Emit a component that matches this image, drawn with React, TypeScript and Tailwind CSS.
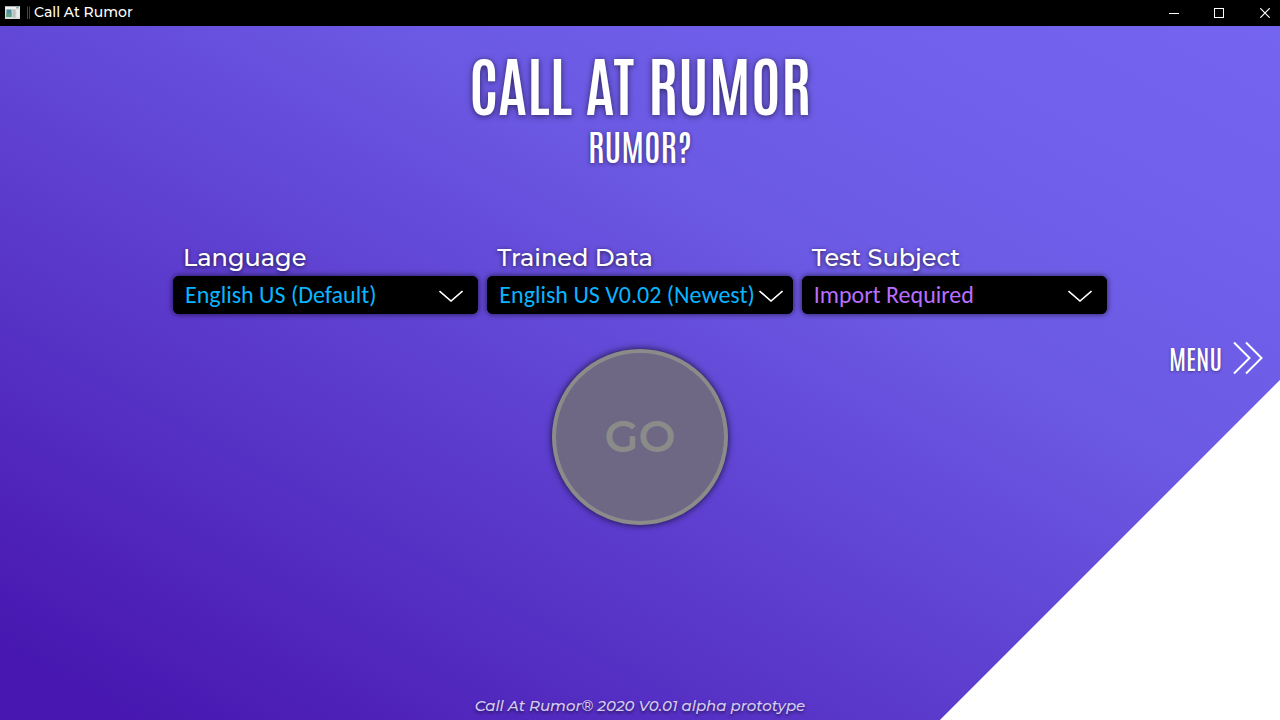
import { useState } from "react";

type FieldProps = {
  id: string;
  label: string;
  options: string[];
  tone: string;
  arrow: string;
};

function SelectField({ id, label, options, tone, arrow }: FieldProps) {
  const [value, setValue] = useState(options[0]);
  return (
    <div className="flex min-w-0 flex-col">
      <label
        htmlFor={id}
        className="pl-[10px] font-['Montserrat','Inter',sans-serif] text-2xl leading-9 font-medium text-white [text-shadow:0_1px_4px_rgba(0,0,0,0.7)]"
      >
        {label}
      </label>
      <div className="grid items-center rounded-md bg-black shadow-[0_0_5px_1px_rgba(0,0,0,0.5)]">
        <select
          id={id}
          value={value}
          onChange={(e) => setValue(e.target.value)}
          className={`col-start-1 row-start-1 h-[38px] w-full cursor-pointer appearance-none rounded-md bg-black pl-3 font-['Carlito','Lato',sans-serif] text-2xl leading-8 ${tone}`}
        >
          {options.map((o) => (
            <option key={o}>{o}</option>
          ))}
        </select>
        <svg
          aria-hidden="true"
          viewBox="0 0 24 14"
          className={`pointer-events-none col-start-1 row-start-1 h-[14px] w-6 justify-self-end ${arrow}`}
          fill="none"
          stroke="#fff"
          strokeWidth="1.6"
        >
          <path d="M0.5 3 12 13 23.5 3" />
        </svg>
      </div>
    </div>
  );
}

export default function App() {
  return (
    <div className="flex min-h-screen flex-col bg-white font-['Montserrat','Inter',sans-serif]">
      <header className="flex h-[26px] items-center bg-black text-white">
        <svg aria-hidden="true" viewBox="0 0 26 14" className="ml-1 h-[14px] w-[26px]">
          <rect x="1" y="0.5" width="15" height="12.5" fill="#d9dcdc" />
          <rect x="1" y="0.5" width="15" height="2.5" fill="#f0f1f1" />
          <rect x="12" y="1" width="3" height="1.5" fill="#8fb4bd" />
          <rect x="2.5" y="3.5" width="5" height="7.5" fill="#4f8fa0" />
          <rect x="2.5" y="7" width="5" height="4" fill="#58a287" />
          <rect x="8.5" y="3.5" width="3" height="8" fill="#bcbfbf" />
          <rect x="12.5" y="3.5" width="3" height="8" fill="#e9ecea" />
          <path d="M23.5 0.5V13M25.5 0.5V13" stroke="#444" strokeWidth="1" />
        </svg>
        <h1 className="ml-1 pb-[2px] text-sm leading-5 font-medium">Call At Rumor</h1>
        <div className="ml-auto flex h-full">
          <button aria-label="Minimize" className="flex w-[45px] items-center justify-center">
            <svg viewBox="0 0 10 10" className="size-[10px]" stroke="#fff"><path d="M0 5.5H10" /></svg>
          </button>
          <button aria-label="Maximize" className="flex w-[45px] items-center justify-center">
            <svg viewBox="0 0 10 10" className="size-[10px]" stroke="#fff" fill="none"><rect x="0.5" y="0.5" width="9" height="9" /></svg>
          </button>
          <button aria-label="Close" className="flex w-[39px] items-center justify-end pr-[10px]">
            <svg viewBox="0 0 10 10" className="size-[10px]" stroke="#fff" strokeWidth="1.2"><path d="M0.3 0.3 9.7 9.7M9.7 0.3 0.3 9.7" /></svg>
          </button>
        </div>
      </header>

      <main className="grid flex-1 bg-[linear-gradient(315deg,#fff_240px,transparent_241px),linear-gradient(29deg,#4817b1_5%,#6c5ae4_66%,#7465f0_100%)]">
        <div className="col-start-1 row-start-1 flex flex-col items-center pt-[18px]">
          <h2 className="font-['Antonio','Liberation_Sans_Narrow','Roboto_Condensed',sans-serif] text-[64px] leading-[78px] font-semibold text-white [text-shadow:0_1px_6px_rgba(0,0,0,0.6)]">
            CALL AT RUMOR
          </h2>
          <p className="font-['Antonio','Liberation_Sans_Narrow','Roboto_Condensed',sans-serif] text-[36px] leading-[46px] font-medium text-white [text-shadow:0_1px_4px_rgba(0,0,0,0.5)]">
            RUMOR?
          </p>
          <div className="mt-[72px] grid w-full max-w-[934px] grid-cols-3 gap-[9px]">
            <SelectField id="language" label="Language" options={["English US (Default)"]} tone="text-[#0ab4ff]" arrow="mr-[15px]" />
            <SelectField id="trained" label="Trained Data" options={["English US V0.02 (Newest)"]} tone="text-[#0ab4ff]" arrow="mr-[10px]" />
            <SelectField id="subject" label="Test Subject" options={["Import Required"]} tone="text-[#b86eff]" arrow="mr-[15px]" />
          </div>
          <button
            disabled
            className="mt-[35px] size-44 rounded-full border-4 border-[#8b8c8a] bg-[#6e6885] pb-[2px] text-[44px] font-semibold text-[#8b8c8a] shadow-[0_0_6px_1px_rgba(0,0,0,0.6)]"
          >
            GO
          </button>
          <footer className="mt-auto pb-1 text-[15px] leading-5 font-medium text-[#d3cdf0] italic [text-shadow:0_2px_3px_rgba(0,0,0,0.5)]">
            Call At Rumor® 2020 V0.01 alpha prototype
          </footer>
        </div>
        <button className="col-start-1 row-start-1 mr-4 mb-[30px] flex items-center gap-[10px] self-center justify-self-end font-['Antonio','Liberation_Sans_Narrow','Roboto_Condensed',sans-serif] text-[27px] leading-8 text-white [text-shadow:0_1px_3px_rgba(0,0,0,0.4)]">
          MENU
          <svg aria-hidden="true" viewBox="0 0 32 34" className="h-[34px] w-8" fill="none" stroke="#fff" strokeWidth="2">
            <path d="M2 1.5 17.5 17 2 32.5M14 1.5 29.5 17 14 32.5" />
          </svg>
        </button>
      </main>
    </div>
  );
}
